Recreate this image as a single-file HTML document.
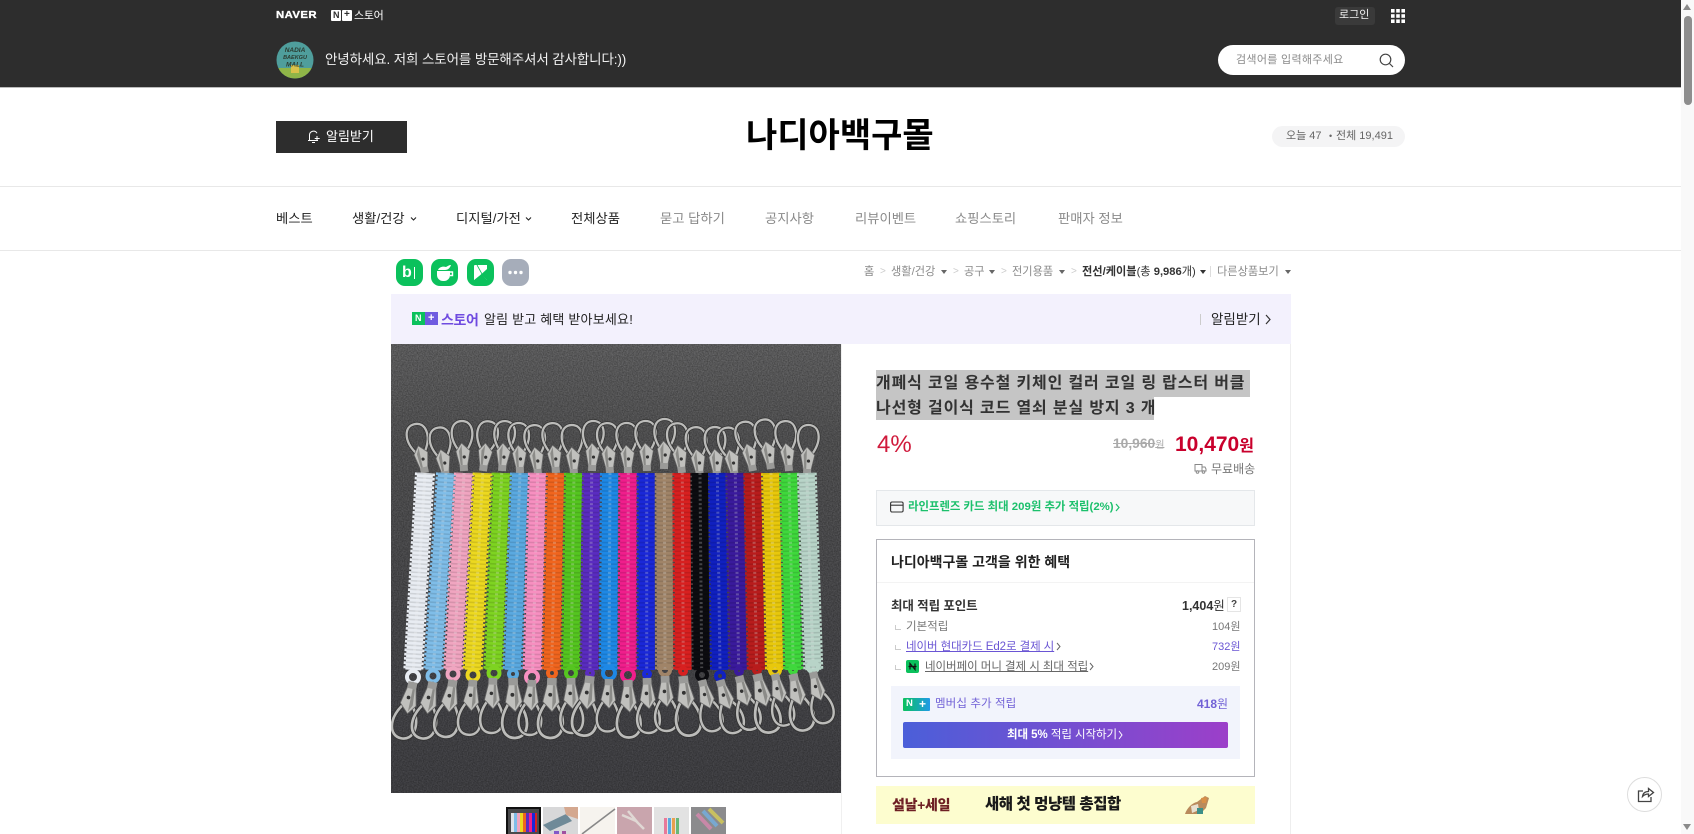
<!DOCTYPE html>
<html lang="ko"><head><meta charset="utf-8"><title>나디아백구몰</title>
<style>
html,body{margin:0;padding:0;width:1694px;height:834px;overflow:hidden;background:#fff}
body{position:relative;font-family:"Liberation Sans","Noto Sans CJK KR",sans-serif;color:#222}
.a,.t{position:absolute}
.t{white-space:nowrap;line-height:20px}
.tri{position:absolute;width:0;height:0;border-left:3px solid transparent;border-right:3px solid transparent;border-top:4px solid #666}
.nav{top:209px;font-size:13.3px}
.g{color:#8a8a8a}
.bc{top:262px;font-size:11.2px;color:#8a8a8a}
.sep{top:262px;font-size:10px;color:#ccc}
.ic{position:absolute;top:259px;width:27px;height:27px;border-radius:9px;background:#0bc15c}
.hook{position:absolute;left:895px;width:5px;height:4px;border-left:1px solid #ccc;border-bottom:1px solid #ccc}
</style></head><body>

<div class="a" style="left:0;top:0;width:1681px;height:87px;background:#2d2d2d;border-bottom:1px solid #bbb;box-sizing:content-box"></div>
<div class="t" style="left:276px;top:5px;font-size:10.5px;font-weight:700;color:#fff;letter-spacing:.4px;transform-origin:left;transform:scaleX(1.08);-webkit-text-stroke:.35px #fff">NAVER</div>
<div class="a" style="left:331px;top:10px;width:10px;height:11px;background:#fff;border-radius:1px"></div>
<div class="a" style="left:342px;top:10px;width:10px;height:11px;background:#fff;border-radius:1px"></div>
<div class="t" style="left:333px;top:5px;font-size:9px;font-weight:700;color:#2d2d2d">N</div>
<div class="t" style="left:344px;top:5px;font-size:10px;font-weight:700;color:#2d2d2d">+</div>
<div class="t" style="left:354px;top:6px;font-size:11px;color:#fff;letter-spacing:-.3px">스토어</div>

<svg class="a" style="left:276px;top:41px" width="38" height="38" viewBox="0 0 38 38">
<defs><clipPath id="av"><circle cx="19" cy="19" r="18.500"/></clipPath></defs>
<g clip-path="url(#av)"><rect width="38" height="38" fill="#4f9e9c"/><rect y="27" width="38" height="11" fill="#8fb548"/><rect x="15" y="24" width="8" height="8" fill="#d9c24a"/>
<text x="19" y="11" font-size="6.500" font-style="italic" font-weight="700" text-anchor="middle" fill="#2b3b30" font-family="Liberation Sans">NADIA</text>
<text x="19" y="18" font-size="5.500" font-style="italic" font-weight="700" text-anchor="middle" fill="#2b3b30" font-family="Liberation Sans">BAEKGU</text>
<text x="19" y="25.500" font-size="6.500" font-style="italic" font-weight="700" text-anchor="middle" fill="#2b3b30" font-family="Liberation Sans">MALL</text></g></svg>
<div class="t" style="left:325px;top:50px;font-size:13.5px;color:#f2f2f2;letter-spacing:-.12px">안녕하세요. 저희 스토어를 방문해주셔서 감사합니다:))</div>

<div class="a" style="left:1335px;top:7px;width:40px;height:18px;border-radius:3px;background:#3a3a3a"></div>
<div class="t" style="left:1339px;top:5px;font-size:11px;color:#f2f2f2">로그인</div>
<svg class="a" style="left:1391px;top:9px" width="14" height="14" fill="#fff"><rect width="3.600" height="3.600"/><rect x="5.200" width="3.600" height="3.600"/><rect x="10.400" width="3.600" height="3.600"/><rect y="5.200" width="3.600" height="3.600"/><rect x="5.200" y="5.200" width="3.600" height="3.600"/><rect x="10.400" y="5.200" width="3.600" height="3.600"/><rect y="10.400" width="3.600" height="3.600"/><rect x="5.200" y="10.400" width="3.600" height="3.600"/><rect x="10.400" y="10.400" width="3.600" height="3.600"/></svg>

<div class="a" style="left:1218px;top:45px;width:187px;height:30px;border-radius:15px;background:#fff"></div>
<div class="t" style="left:1236px;top:50px;font-size:11px;color:#8a8a8a;letter-spacing:.3px">검색어를 입력해주세요</div>
<svg class="a" style="left:1379px;top:53px" width="15" height="15" fill="none" stroke="#444" stroke-width="1.200"><circle cx="6.500" cy="6.500" r="5.300"/><path d="M10.500 10.500L14 14"/></svg>

<div class="a" style="left:276px;top:121px;width:131px;height:32px;background:#2d2d2d"></div>
<svg class="a" style="left:306px;top:128px" width="17" height="17" fill="none" stroke="#fff" stroke-width="1"><path d="M2 12.500h10M3.500 12.500V7a4 4 0 0 1 7.500-1.800M6 14.500h3"/><path d="M11 8v5M8.700 10.500h5" stroke-width="1"/></svg>
<div class="t" style="left:326px;top:127px;font-size:13px;color:#fff">알림받기</div>

<div class="t" style="left:746px;top:116px;font-size:34px;line-height:40px;font-weight:700;color:#000">나디아백구몰</div>

<div class="a" style="left:1272px;top:126px;width:133px;height:21px;border-radius:11px;background:#f4f4f5"></div>
<div class="t" style="left:1286px;top:126px;font-size:11px;color:#666">오늘 47</div>
<div class="t" style="left:1329px;top:126px;font-size:9px;color:#666">•</div>
<div class="t" style="left:1336px;top:126px;font-size:11px;color:#666">전체 19,491</div>

<div class="a" style="left:0;top:186px;width:1681px;height:65px;border-top:1px solid #e8e8e8;border-bottom:1px solid #e8e8e8;box-sizing:border-box"></div>
<div class="t nav" style="left:276px">베스트</div>
<div class="t nav" style="left:352px">생활/건강</div>
<svg class="a" style="left:410px;top:216px" width="7" height="6" fill="none" stroke="#222" stroke-width="1.100"><path d="M1 1.500L3.500 4L6 1.500"/></svg>
<div class="t nav" style="left:456px">디지털/가전</div>
<svg class="a" style="left:525px;top:216px" width="7" height="6" fill="none" stroke="#222" stroke-width="1.100"><path d="M1 1.500L3.500 4L6 1.500"/></svg>
<div class="t nav" style="left:571px">전체상품</div>
<div class="t nav g" style="left:660px">묻고 답하기</div>
<div class="t nav g" style="left:765px">공지사항</div>
<div class="t nav g" style="left:855px">리뷰이벤트</div>
<div class="t nav g" style="left:955px">쇼핑스토리</div>
<div class="t nav g" style="left:1058px">판매자 정보</div>

<div class="ic" style="left:396px"></div>
<div class="t" style="left:402px;top:263px;font-size:16px;font-weight:700;color:#fff">b</div>
<div class="a" style="left:414px;top:267px;width:1px;height:12px;background:#fff"></div>
<div class="ic" style="left:431px"></div>
<svg class="a" style="left:431px;top:259px" width="27" height="27" fill="#fff"><path d="M6 12h13v4a6 6 0 0 1-6 6h-1a6 6 0 0 1-6-6z"/><path d="M19 13h2.500v3.500H19" fill="none" stroke="#fff" stroke-width="1.400"/><path d="M7 11c1-3 5-4 8-3 2-1 3-2 5-2-1 3-3 5-6 5z"/></svg>
<div class="ic" style="left:467px"></div>
<svg class="a" style="left:467px;top:259px" width="27" height="27"><path d="M7 7a1 1 0 0 1 1-1h12v15l-6-6-7 6z" fill="#fff"/><path d="M20 10l-6 5.500L20 21z" fill="#0bc15c"/><path d="M7 21V7l7 8.500z" fill="#fff"/><path d="M10 6l5 9" stroke="#0bc15c" stroke-width=".8"/></svg>
<div class="ic" style="left:502px;background:#a6adba"></div>
<svg class="a" style="left:502px;top:259px" width="27" height="27" fill="#fff"><circle cx="8" cy="13.500" r="1.700"/><circle cx="13.500" cy="13.500" r="1.700"/><circle cx="19" cy="13.500" r="1.700"/></svg>

<div class="t bc" style="left:864px">홈</div><div class="t sep" style="left:880px">&gt;</div>
<div class="t bc" style="left:891px">생활/건강</div><div class="tri" style="left:941px;top:270px"></div><div class="t sep" style="left:953px">&gt;</div>
<div class="t bc" style="left:964px">공구</div><div class="tri" style="left:989px;top:270px"></div><div class="t sep" style="left:1001px">&gt;</div>
<div class="t bc" style="left:1012px">전기용품</div><div class="tri" style="left:1059px;top:270px"></div><div class="t sep" style="left:1071px">&gt;</div>
<div class="t bc" style="left:1082px;color:#333;font-weight:700">전선/케이블<span style="font-weight:400">(총 <b>9,986</b>개)</span></div><div class="tri" style="left:1200px;top:270px;border-top-color:#333"></div>
<div class="a" style="left:1210px;top:266px;width:1px;height:11px;background:#ddd"></div>
<div class="t bc" style="left:1217px">다른상품보기</div><div class="tri" style="left:1285px;top:270px"></div>

<div class="a" style="left:391px;top:294px;width:900px;height:50px;background:#f3f1fd"></div>
<div class="a" style="left:412px;top:312px;width:13px;height:13px;background:#0bc15c"></div>
<div class="a" style="left:425px;top:312px;width:13px;height:13px;background:#6f5be0"></div>
<div class="t" style="left:415px;top:308px;font-size:9px;font-weight:700;color:#fff">N</div>
<div class="t" style="left:428px;top:308px;font-size:11px;font-weight:700;color:#fff">+</div>
<div class="t" style="left:441px;top:310px;font-size:14px;font-weight:700;color:#6f4be0;letter-spacing:-.4px">스토어</div>
<div class="t" style="left:484px;top:310px;font-size:13px;color:#222;letter-spacing:.2px">알림 받고 혜택 받아보세요!</div>
<div class="a" style="left:1200px;top:314px;width:1px;height:11px;background:#ccc"></div>
<div class="t" style="left:1211px;top:310px;font-size:13.500px;color:#222">알림받기</div>
<svg class="a" style="left:1265px;top:314px" width="7" height="11" fill="none" stroke="#333" stroke-width="1.200"><path d="M1 1l4 4.500-4 4.500"/></svg>

<div class="a" style="left:391px;top:344px;width:900px;height:490px;border-right:1px solid #eee;box-sizing:border-box"></div>
<div class="a" style="left:841px;top:344px;width:1px;height:490px;background:#f0f0f0"></div>

<svg class="a" style="left:391px;top:344px" width="450" height="449" viewBox="0 0 450 449">
<defs>
<linearGradient id="bg" x1="0" y1="0" x2="0" y2="1"><stop offset="0" stop-color="#6a6a6b"/><stop offset=".22" stop-color="#5a5a5b"/><stop offset=".8" stop-color="#4b4b4f"/><stop offset="1" stop-color="#47474b"/></linearGradient>
<filter id="nz" x="0" y="0" width="100%" height="100%"><feTurbulence type="fractalNoise" baseFrequency=".8" numOctaves="2" seed="3"/><feColorMatrix values="0 0 0 0 0  0 0 0 0 0  0 0 0 0 0  1.400 0 0 0 -.3"/></filter>
<g id="c" fill="none"><path d="M5 -22C14 -36 11 -50 0 -50C-11 -50 -14 -36 -5 -22" stroke="#333" stroke-width="3.800"/><path d="M5 -22C14 -36 11 -50 0 -50C-11 -50 -14 -36 -5 -22" stroke="#bcbcba" stroke-width="2.300"/><path d="M0 0L-4 -6L-7 -20L-1 -28L7 -20L4 -6Z" fill="#c0c0bd" stroke="#666" stroke-width=".7"/><path d="M-4 -20L-1 -26L-1 -6L-3 -6Z" fill="#8b8b88"/><circle cx="1" cy="-14" r="1.600" fill="#333"/><rect x="-4" y="-6" width="8" height="6" fill="#9a9a98"/></g>
<g id="L">
<line x1="34" y1="129" x2="22.300" y2="326"/><line x1="55" y1="129" x2="42.300" y2="326"/><line x1="73" y1="129" x2="62.300" y2="326"/><line x1="91.700" y1="129" x2="81.700" y2="326"/><line x1="110.700" y1="129" x2="102.300" y2="326"/><line x1="129" y1="129" x2="121.700" y2="326"/><line x1="146.700" y1="129" x2="141.700" y2="326"/><line x1="165" y1="129" x2="160.700" y2="326"/><line x1="183" y1="129" x2="180" y2="326"/><line x1="200.700" y1="129" x2="199" y2="326"/><line x1="219" y1="129" x2="218" y2="326"/><line x1="237.300" y1="129" x2="236.700" y2="326"/><line x1="255.700" y1="129" x2="255.700" y2="326"/><line x1="273.300" y1="129" x2="274" y2="326"/><line x1="291.300" y1="129" x2="292.300" y2="326"/><line x1="309" y1="129" x2="310.700" y2="326"/><line x1="326.300" y1="129" x2="329" y2="326"/><line x1="344.300" y1="129" x2="347.700" y2="326"/><line x1="361.700" y1="129" x2="365.700" y2="326"/><line x1="380" y1="129" x2="384" y2="326"/><line x1="398" y1="129" x2="402.300" y2="326"/><line x1="415.700" y1="129" x2="422.300" y2="326"/>
</g>
<g id="C">
<line x1="34" y1="129" x2="22.300" y2="326" stroke="#e8ecf2"/><line x1="55" y1="129" x2="42.300" y2="326" stroke="#7fbde8"/><line x1="73" y1="129" x2="62.300" y2="326" stroke="#f0a5c0"/><line x1="91.700" y1="129" x2="81.700" y2="326" stroke="#ecd820"/><line x1="110.700" y1="129" x2="102.300" y2="326" stroke="#7ed321"/><line x1="129" y1="129" x2="121.700" y2="326" stroke="#5aa9e0"/><line x1="146.700" y1="129" x2="141.700" y2="326" stroke="#f78fc0"/><line x1="165" y1="129" x2="160.700" y2="326" stroke="#f0651e"/><line x1="183" y1="129" x2="180" y2="326" stroke="#55c520"/><line x1="200.700" y1="129" x2="199" y2="326" stroke="#5a2cc0"/><line x1="219" y1="129" x2="218" y2="326" stroke="#1e88e5"/><line x1="237.300" y1="129" x2="236.700" y2="326" stroke="#f01e8c"/><line x1="255.700" y1="129" x2="255.700" y2="326" stroke="#1a28d8"/><line x1="273.300" y1="129" x2="274" y2="326" stroke="#a08468"/><line x1="291.300" y1="129" x2="292.300" y2="326" stroke="#d82020"/><line x1="309" y1="129" x2="310.700" y2="326" stroke="#0c0c10"/><line x1="326.300" y1="129" x2="329" y2="326" stroke="#1020c0"/><line x1="344.300" y1="129" x2="347.700" y2="326" stroke="#3a1a9c"/><line x1="361.700" y1="129" x2="365.700" y2="326" stroke="#b81c1c"/><line x1="380" y1="129" x2="384" y2="326" stroke="#e8c80c"/><line x1="398" y1="129" x2="402.300" y2="326" stroke="#3fd83c"/><line x1="415.700" y1="129" x2="422.300" y2="326" stroke="#b8d4c8"/>
</g>
</defs>
<rect width="450" height="449" fill="url(#bg)"/>
<rect width="450" height="449" filter="url(#nz)" opacity=".4"/>
<g>
<use href="#c" transform="translate(34,129) rotate(-12)"/><use href="#c" transform="translate(55,133) rotate(-9)"/><use href="#c" transform="translate(73,127) rotate(-3)"/><use href="#c" transform="translate(92,127) rotate(7)"/><use href="#c" transform="translate(111,127) rotate(4)"/><use href="#c" transform="translate(129,129) rotate(-2)"/><use href="#c" transform="translate(147,131) rotate(-5)"/><use href="#c" transform="translate(165,129) rotate(-5)"/><use href="#c" transform="translate(183,131) rotate(-3)"/><use href="#c" transform="translate(201,127) rotate(2)"/><use href="#c" transform="translate(219,129) rotate(-4)"/><use href="#c" transform="translate(237,129) rotate(-2)"/><use href="#c" transform="translate(256,127) rotate(-2)"/><use href="#c" transform="translate(273,125) rotate(1)"/><use href="#c" transform="translate(291,129) rotate(-7)"/><use href="#c" transform="translate(309,133) rotate(-6)"/><use href="#c" transform="translate(326,133) rotate(-3)"/><use href="#c" transform="translate(344,133) rotate(-10)"/><use href="#c" transform="translate(362,127) rotate(-11)"/><use href="#c" transform="translate(380,125) rotate(-9)"/><use href="#c" transform="translate(398,127) rotate(-5)"/><use href="#c" transform="translate(416,131) rotate(2)"/>
</g>
<use href="#C" stroke-width="20" stroke-dasharray="2.700 1.600"/>
<use href="#C" stroke-width="16"/>
<use href="#L" stroke="#000" stroke-opacity=".11" stroke-width="16" stroke-dasharray="1.600 2.700"/>
<use href="#L" stroke="#fff" stroke-opacity=".24" stroke-width="3" stroke-dasharray="2 2.300"/>
<g fill="none" stroke-width="4">
<circle cx="22" cy="333" r="6" stroke="#e8ecf2"/><circle cx="42" cy="332" r="5.500" stroke="#7fbde8"/><circle cx="62" cy="330" r="5.500" stroke="#f0a5c0"/><circle cx="82" cy="331" r="5.500" stroke="#ecd820"/><circle cx="103" cy="329" r="5.500" stroke="#7ed321"/><circle cx="122" cy="330" r="4" stroke="#5aa9e0"/><circle cx="141" cy="333" r="6" stroke="#f78fc0"/><circle cx="161" cy="329" r="4" stroke="#f0651e"/><circle cx="180" cy="329" r="5" stroke="#55c520"/><circle cx="199" cy="329" r="3" stroke="#5a2cc0"/><circle cx="218" cy="329" r="6" stroke="#1e88e5"/><circle cx="237" cy="331" r="6" stroke="#f01e8c"/><circle cx="256" cy="330" r="3" stroke="#1a28d8"/><circle cx="274" cy="326" r="5" stroke="#a08468"/><circle cx="292" cy="327" r="3" stroke="#d82020"/><circle cx="311" cy="331" r="5" stroke="#0c0c10"/><circle cx="329" cy="332" r="4" stroke="#1020c0"/><circle cx="348" cy="327" r="3" stroke="#3a1a9c"/><circle cx="366" cy="326" r="3" stroke="#b81c1c"/><circle cx="384" cy="326" r="5" stroke="#e8c80c"/><circle cx="402" cy="326" r="3" stroke="#3fd83c"/><circle cx="422" cy="323" r="5" stroke="#b8d4c8"/>
</g>
<g>
<use href="#c" transform="translate(22,338) rotate(192) scale(1.150)"/><use href="#c" transform="translate(42,338) rotate(192) scale(1.150)"/><use href="#c" transform="translate(62,336) rotate(189) scale(1.150)"/><use href="#c" transform="translate(82,336) rotate(185) scale(1.100)"/><use href="#c" transform="translate(102,334) rotate(182) scale(1.100)"/><use href="#c" transform="translate(122,334) rotate(178) scale(1.200)"/><use href="#c" transform="translate(141,336) rotate(183) scale(1.100)"/><use href="#c" transform="translate(161,334) rotate(182) scale(1.200)"/><use href="#c" transform="translate(180,334) rotate(179) scale(1.100)"/><use href="#c" transform="translate(199,332) rotate(187) scale(1.200)"/><use href="#c" transform="translate(218,335) rotate(182) scale(1.050)"/><use href="#c" transform="translate(237,336) rotate(179) scale(1.150)"/><use href="#c" transform="translate(256,334) rotate(178) scale(1.100)"/><use href="#c" transform="translate(274,332) rotate(178) scale(1.100)"/><use href="#c" transform="translate(292,332) rotate(173) scale(1.200)"/><use href="#c" transform="translate(311,336) rotate(166) scale(1.050)"/><use href="#c" transform="translate(329,336) rotate(163) scale(1.100)"/><use href="#c" transform="translate(348,332) rotate(166) scale(1.100)"/><use href="#c" transform="translate(366,330) rotate(166) scale(1.200)"/><use href="#c" transform="translate(384,330) rotate(168) scale(1.050)"/><use href="#c" transform="translate(402,330) rotate(168) scale(1.150)"/><use href="#c" transform="translate(422,328) rotate(166) scale(1.050)"/>
</g>
</svg>

<svg class="a" style="left:506px;top:807px" width="222" height="27" viewBox="0 0 222 27">
<rect x="0" y="0" width="35" height="27" fill="#111"/><rect x="2" y="2" width="31" height="25" fill="#4a4a4c"/>
<rect x="5" y="6" width="3" height="19" fill="#dfe4ea"/><rect x="8" y="6" width="3" height="19" fill="#7fbde8"/><rect x="11" y="6" width="3" height="19" fill="#f0a5c0"/><rect x="14" y="6" width="3" height="19" fill="#ecd820"/><rect x="17" y="6" width="3" height="19" fill="#f0651e"/><rect x="20" y="6" width="3" height="19" fill="#5a2cc0"/><rect x="23" y="6" width="3" height="19" fill="#f01e8c"/><rect x="26" y="6" width="3" height="19" fill="#1a28d8"/><rect x="29" y="6" width="2" height="19" fill="#d82020"/>
<rect x="37" y="0" width="35" height="27" fill="#d8d8d9"/><path d="M37 18L60 7L66 14L44 24Z" fill="#6f8a98"/><path d="M58 0h14v12L60 8Z" fill="#d4a890"/><rect x="48" y="24" width="5" height="3" fill="#8258c8"/><rect x="56" y="24" width="4" height="3" fill="#a050a0"/>
<rect x="74" y="0" width="35" height="27" fill="#f6f3ee"/><path d="M76 27L109 2" stroke="#888" stroke-width="1.600"/>
<rect x="111" y="0" width="35" height="27" fill="#c9a5ad"/><path d="M116 8l14 6 8 8M122 4l10 12" stroke="#e0d8d4" stroke-width="2.500" fill="none"/>
<rect x="148" y="0" width="35" height="27" fill="#e2e2e2"/><rect x="158" y="11" width="3" height="16" fill="#e87a9a"/><rect x="162" y="11" width="3" height="16" fill="#5aa9e0"/><rect x="166" y="11" width="3" height="16" fill="#e8a050"/><rect x="170" y="11" width="3" height="16" fill="#68b878"/>
<rect x="185" y="0" width="35" height="27" fill="#8b8b8d"/><path d="M191 7L205 22" stroke="#c888a8" stroke-width="4"/><path d="M197 4L211 19" stroke="#78a8d0" stroke-width="4"/><path d="M203 2L217 16" stroke="#c8c060" stroke-width="4"/>
</svg>

<div class="a" style="left:876px;top:370px;width:374px;height:27px;background:#c5c5c5"></div>
<div class="a" style="left:876px;top:397px;width:278px;height:23px;background:#c5c5c5"></div>
<div class="t" style="left:876px;top:371px;font-size:16px;line-height:25px;font-weight:700;color:#333;letter-spacing:.85px">개폐식 코일 용수철 키체인 컬러 코일 링 랍스터 버클<br>나선형 걸이식 코드 열쇠 분실 방지 3 개</div>

<div class="t" style="left:877px;top:433px;font-size:24px;line-height:24px;color:#d01a3c">4%</div>
<div class="t" style="left:1113px;top:434px;font-size:13.800px;font-weight:700;color:#aaa;text-decoration:line-through">10,960<span style="font-size:10px;font-weight:400">원</span></div>
<div class="t" style="left:1175px;top:435px;font-size:21px;font-weight:700;color:#c9002c">10,470<span style="font-size:16px">원</span></div>
<svg class="a" style="left:1194px;top:463px" width="13" height="11" fill="none" stroke="#888" stroke-width="1"><path d="M1 1.500h7v6.500H1zM8 4h3l1 2v2H8"/><circle cx="3.500" cy="9" r="1.300"/><circle cx="9.500" cy="9" r="1.300"/></svg>
<div class="t" style="left:1211px;top:459px;font-size:12px;color:#777">무료배송</div>

<div class="a" style="left:876px;top:490px;width:379px;height:36px;background:#f7f8f9;border:1px solid #e4e7ea;box-sizing:border-box"></div>
<svg class="a" style="left:890px;top:501px" width="14" height="12" fill="none" stroke="#333" stroke-width="1.100"><rect x=".6" y="1" width="12.500" height="10" rx="1.500"/><path d="M1 4.200h12"/></svg>
<div class="t" style="left:908px;top:497px;font-size:11.400px;font-weight:700;color:#1cc06c">라인프렌즈 카드 최대 209원 추가 적립(2%)</div>
<svg class="a" style="left:1115px;top:503px" width="6" height="9" fill="none" stroke="#1cc06c" stroke-width="1.200"><path d="M1 1l3 3.500-3 3.500"/></svg>

<div class="a" style="left:876px;top:539px;width:379px;height:238px;border:1px solid #b4b4ba;box-sizing:border-box"></div>
<div class="t" style="left:891px;top:552px;font-size:14px;font-weight:700;color:#222;letter-spacing:0">나디아백구몰 고객을 위한 혜택</div>
<div class="a" style="left:877px;top:582px;width:377px;height:1px;background:#f3f3f3"></div>

<div class="t" style="left:891px;top:596px;font-size:12.500px;font-weight:700;color:#333;letter-spacing:-.1px">최대 적립 포인트</div>
<div class="t" style="left:1182px;top:596px;font-size:12.500px;color:#333"><b>1,404</b>원</div>
<div class="a" style="left:1227px;top:597px;width:14px;height:15px;background:#fff;border:1px solid #e5e5e5;box-sizing:border-box"></div>
<div class="t" style="left:1231px;top:595px;font-size:10px;font-weight:700;color:#444">?</div>

<div class="hook" style="top:625px"></div>
<div class="t g" style="left:906px;top:617px;font-size:11.500px;color:#777">기본적립</div>
<div class="t" style="left:1212px;top:617px;font-size:11px;color:#777">104원</div>
<div class="hook" style="top:645px"></div>
<div class="t" style="left:906px;top:637px;font-size:11.500px;color:#6a55d4;text-decoration:underline;letter-spacing:-.08px">네이버 현대카드 Ed2로 결제 시</div>
<svg class="a" style="left:1056px;top:642px" width="6" height="9" fill="none" stroke="#666" stroke-width="1"><path d="M1 1l3 3.500-3 3.500"/></svg>
<div class="t" style="left:1212px;top:637px;font-size:11px;color:#6a55d4">732원</div>
<div class="hook" style="top:665px"></div>
<div class="a" style="left:906px;top:660px;width:13px;height:13px;border-radius:2px;background:#0bc15c"></div>
<svg class="a" style="left:906px;top:660px" width="13" height="13" fill="none" stroke="#111" stroke-width="1.200"><path d="M4 9.500V3.500L9 9.500V3.500M2.500 6.500h8"/></svg>
<div class="t" style="left:925px;top:657px;font-size:11.500px;color:#666;text-decoration:underline;letter-spacing:-.05px">네이버페이 머니 결제 시 최대 적립</div>
<svg class="a" style="left:1089px;top:662px" width="6" height="9" fill="none" stroke="#666" stroke-width="1"><path d="M1 1l3 3.500-3 3.500"/></svg>
<div class="t" style="left:1212px;top:657px;font-size:11px;color:#777">209원</div>

<div class="a" style="left:891px;top:686px;width:349px;height:73px;background:#f2f4fc"></div>
<div class="a" style="left:903px;top:698px;width:27px;height:13px;border-radius:1px;background:linear-gradient(90deg,#0bc15c,#1f9ae8)"></div>
<div class="t" style="left:906px;top:694px;font-size:9.500px;font-weight:700;color:#fff">N</div>
<div class="t" style="left:919px;top:694px;font-size:12px;font-weight:700;color:#fff">+</div>
<div class="t" style="left:935px;top:694px;font-size:11.500px;color:#7161d6;letter-spacing:.1px">멤버십 추가 적립</div>
<div class="t" style="left:1197px;top:694px;font-size:12px;color:#7161d6"><b>418</b>원</div>
<div class="a" style="left:903px;top:722px;width:325px;height:26px;border-radius:2px;background:linear-gradient(90deg,#4b5fd9,#9c3fc9)"></div>
<div class="t" style="left:1007px;top:725px;font-size:11.500px;color:#fff;letter-spacing:-.06px"><b>최대 5%</b> 적립 시작하기</div>
<svg class="a" style="left:1118px;top:730px" width="6" height="10" fill="none" stroke="#fff" stroke-width="1"><path d="M1 1l3 4-3 4"/></svg>

<div class="a" style="left:876px;top:786px;width:379px;height:38px;background:#fdfdcf"></div>
<div class="t" style="left:892px;top:795px;font-size:14px;font-weight:900;color:#6e1f24;letter-spacing:-.3px">설날+세일</div>
<div class="t" style="left:985px;top:795px;font-size:15.500px;font-weight:900;color:#1a1a1a;letter-spacing:-.45px">새해 첫 멍냥템 총집합</div>
<svg class="a" style="left:1183px;top:794px" width="27" height="21"><path d="M2 20C4 14 9 9 14 8L22 2L26 4L23 14L17 20Z" fill="#b98a5c"/><path d="M8 12L15 10L16 16L9 19Z" fill="#e8e0d0"/><rect x="14" y="14" width="6" height="6" fill="#3c8f88"/><path d="M18 4L24 3L23 9L19 9Z" fill="#d89048"/></svg>

<div class="a" style="left:1627px;top:777px;width:35px;height:35px;border-radius:50%;background:#fff;border:1px solid #ddd;box-sizing:border-box"></div>
<svg class="a" style="left:1637px;top:786px" width="18" height="17" fill="none" stroke="#444" stroke-width="1.300"><path d="M6 5H1.500v10.500h12.500V11"/><path d="M5.500 10.500C6 7 8.500 5.500 11.500 5.500V2.500L16.500 6.500L11.500 10.500V8C9 8 7 9 5.500 10.500Z"/></svg>

<div class="a" style="left:1681px;top:0;width:13px;height:834px;background:#f9f9f9"></div>
<div class="a" style="left:1684px;top:16px;width:8px;height:89px;border-radius:4px;background:#8e8e8e"></div>
<div class="a" style="left:1683px;top:4px;width:0;height:0;border-left:4.500px solid transparent;border-right:4.500px solid transparent;border-bottom:6px solid #8a8a8a"></div>
<div class="a" style="left:1683px;top:824px;width:0;height:0;border-left:4.500px solid transparent;border-right:4.500px solid transparent;border-top:6px solid #8a8a8a"></div>
</body></html>
